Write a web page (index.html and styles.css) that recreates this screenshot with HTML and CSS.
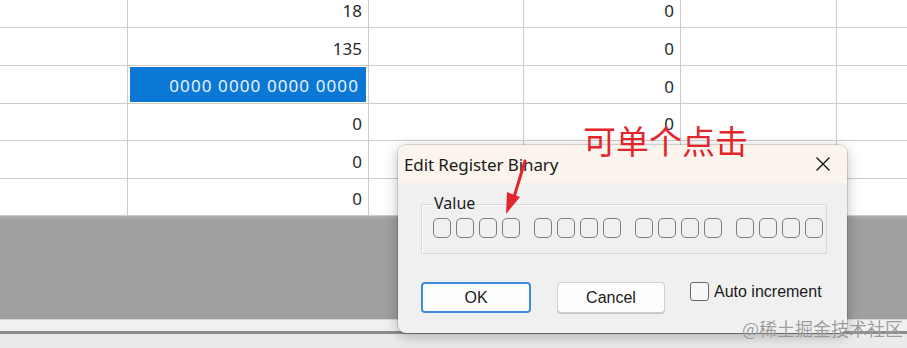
FILE: index.html
```html
<!DOCTYPE html>
<html>
<head>
<meta charset="utf-8">
<link rel="stylesheet" href="styles.css">
</head>
<body>
<div class="screen">
  <div class="table">
    <div class="row r38">
      <div class="cell"></div><div class="cell num">18</div><div class="cell"></div><div class="cell num">0</div><div class="cell"></div><div class="cell last"></div>
    </div>
    <div class="row r38">
      <div class="cell"></div><div class="cell num">135</div><div class="cell"></div><div class="cell num">0</div><div class="cell"></div><div class="cell last"></div>
    </div>
    <div class="row r38">
      <div class="cell"></div><div class="cell sel-wrap"><div class="sel">0000 0000 0000 0000</div></div><div class="cell"></div><div class="cell num">0</div><div class="cell"></div><div class="cell last"></div>
    </div>
    <div class="row r37">
      <div class="cell"></div><div class="cell num">0</div><div class="cell"></div><div class="cell num">0</div><div class="cell"></div><div class="cell last"></div>
    </div>
    <div class="row r38">
      <div class="cell"></div><div class="cell num">0</div><div class="cell"></div><div class="cell num">0</div><div class="cell"></div><div class="cell last"></div>
    </div>
    <div class="row r37">
      <div class="cell"></div><div class="cell num">0</div><div class="cell"></div><div class="cell num">0</div><div class="cell"></div><div class="cell last"></div>
    </div>
  </div>
  <div class="gray-area"></div>
  <div class="strip"></div>
  <div class="dark-line"></div>
  <div class="bottom"></div>

  <div class="dialog">
    <div class="titlebar">
      <span class="title">Edit Register Binary</span>
      <svg class="close" width="16" height="16" viewBox="0 0 16 16"><path d="M1.5 1.5 L14.5 14.5 M14.5 1.5 L1.5 14.5" stroke="#1a1a1a" stroke-width="1.4" fill="none"/></svg>
    </div>
    <div class="body">
      <div class="group">
        <span class="legend">Value</span>
        <div class="bits">
          <div class="nibble"><span class="bit"></span><span class="bit"></span><span class="bit"></span><span class="bit"></span></div>
          <div class="nibble"><span class="bit"></span><span class="bit"></span><span class="bit"></span><span class="bit"></span></div>
          <div class="nibble"><span class="bit"></span><span class="bit"></span><span class="bit"></span><span class="bit"></span></div>
          <div class="nibble"><span class="bit"></span><span class="bit"></span><span class="bit"></span><span class="bit"></span></div>
        </div>
      </div>
      <div class="actions">
        <button class="btn ok">OK</button>
        <button class="btn cancel">Cancel</button>
        <label class="check"><span class="box"></span>Auto increment</label>
      </div>
    </div>
  </div>

  <div class="note">可单个点击</div>
  <svg class="arrow" width="40" height="60" viewBox="0 0 40 60">
    <path d="M27 2 L16 38" stroke="#e2262b" stroke-width="3" stroke-linecap="round" fill="none"/>
    <path d="M8 55 L9 33 L22 38 Z" fill="#e2262b"/>
  </svg>
  <div class="watermark">@稀土掘金技术社区</div>
</div>
</body>
</html>
```

FILE: styles.css
```css
* { box-sizing: border-box; }
html, body { margin: 0; padding: 0; }
body { width: 907px; height: 348px; overflow: hidden; background: #e9e9e9; }
.screen { position: relative; width: 907px; height: 348px; overflow: hidden; font-family: "Noto Sans", sans-serif; }

.table { margin-top: -10px; background: #fff; }
.row { display: grid; grid-template-columns: 128px 241px 155px 157px 156px 1fr; border-bottom: 1px solid #cdcdcd; }
.r38 { height: 38px; }
.r37 { height: 37px; }
.cell { border-right: 1px solid #cdcdcd; display: flex; align-items: center; justify-content: flex-end; padding: 3px 6px 0 0; font-size: 17px; color: #262a30; }
.cell.last { border-right: none; }
.sel-wrap { padding: 1px 2px 1px 2px; align-items: stretch; }
.sel { flex: 1; background: #0b78d6; color: #eaf2ff; display: flex; align-items: center; justify-content: flex-end; padding: 2px 7px 0 0; font-size: 17px; letter-spacing: 1.1px; }

.gray-area { height: 103px; background: #a0a0a0; border-top: 3px solid #a9a9a9; }
.strip { height: 12px; background: #f0f0f0; border-top: 1px solid #d5d5d5; }
.dark-line { height: 3px; background: #8c8c8c; }
.bottom { height: 20px; background: #ebebeb; }

.dialog { position: absolute; left: 398px; top: 145px; width: 449px; height: 188px; border-radius: 8px; background: #f0f0f0; overflow: hidden; box-shadow: 0 3px 14px rgba(0,0,0,0.28), 0 0 0 1px rgba(0,0,0,0.12); }
.titlebar { height: 38px; background: #faf4ec; display: flex; align-items: center; justify-content: space-between; padding: 0 16px 0 6px; }
.title { font-size: 17px; color: #1a1a1a; padding-top: 1px; letter-spacing: -0.1px; }
.close { display: block; }
.body { padding: 21px 20px 0 23px; }
.group { position: relative; width: 406px; height: 50px; border: 1px solid #dadada; box-shadow: inset 1px 1px 0 #fafafa; padding: 13px 0 0 11px; }
.legend { position: absolute; left: 10px; top: -12px; padding: 0 2px; background: #f0f0f0; font-size: 16px; color: #1a1a1a; line-height: 20px; }
.bits { display: flex; gap: 14px; }
.nibble { display: flex; gap: 5px; }
.bit { width: 18px; height: 20px; border: 1.6px solid #7d7d7d; border-radius: 5px; background: #f0f0f0; }

.actions { display: flex; align-items: flex-start; margin-top: 28px; font-family: "Liberation Sans", Arial, sans-serif; }
.btn { font-family: "Liberation Sans", Arial, sans-serif; font-size: 16px; color: #1a1a1a; height: 31px; border-radius: 4px; padding: 0; display: flex; align-items: center; justify-content: center; }
.ok { width: 110px; background: #fdfdfd; border: 2px solid #3d8ee2; }
.cancel { width: 108px; margin-left: 26px; background: #fdfdfd; border: 1px solid #cfcfcf; box-shadow: 0 1px 0 #c4c4c4; }
.check { display: flex; align-items: center; margin-left: 25px; font-size: 16px; color: #1a1a1a; height: 19px; gap: 5px; }
.box { width: 19px; height: 19px; border: 1.6px solid #6a6a6a; border-radius: 3px; background: #f7f7f7; }

.note { position: absolute; left: 583px; top: 124px; font-family: "Noto Sans CJK SC", sans-serif; font-size: 33px; line-height: 1; color: #e2262b; }
.arrow { position: absolute; left: 498px; top: 159px; }
.watermark { position: absolute; left: 742px; top: 317px; font-family: "Noto Sans CJK SC", sans-serif; font-size: 18px; line-height: 22px; color: rgba(125,125,125,0.75); text-shadow: 0 0 1px rgba(255,255,255,0.6); }
```
